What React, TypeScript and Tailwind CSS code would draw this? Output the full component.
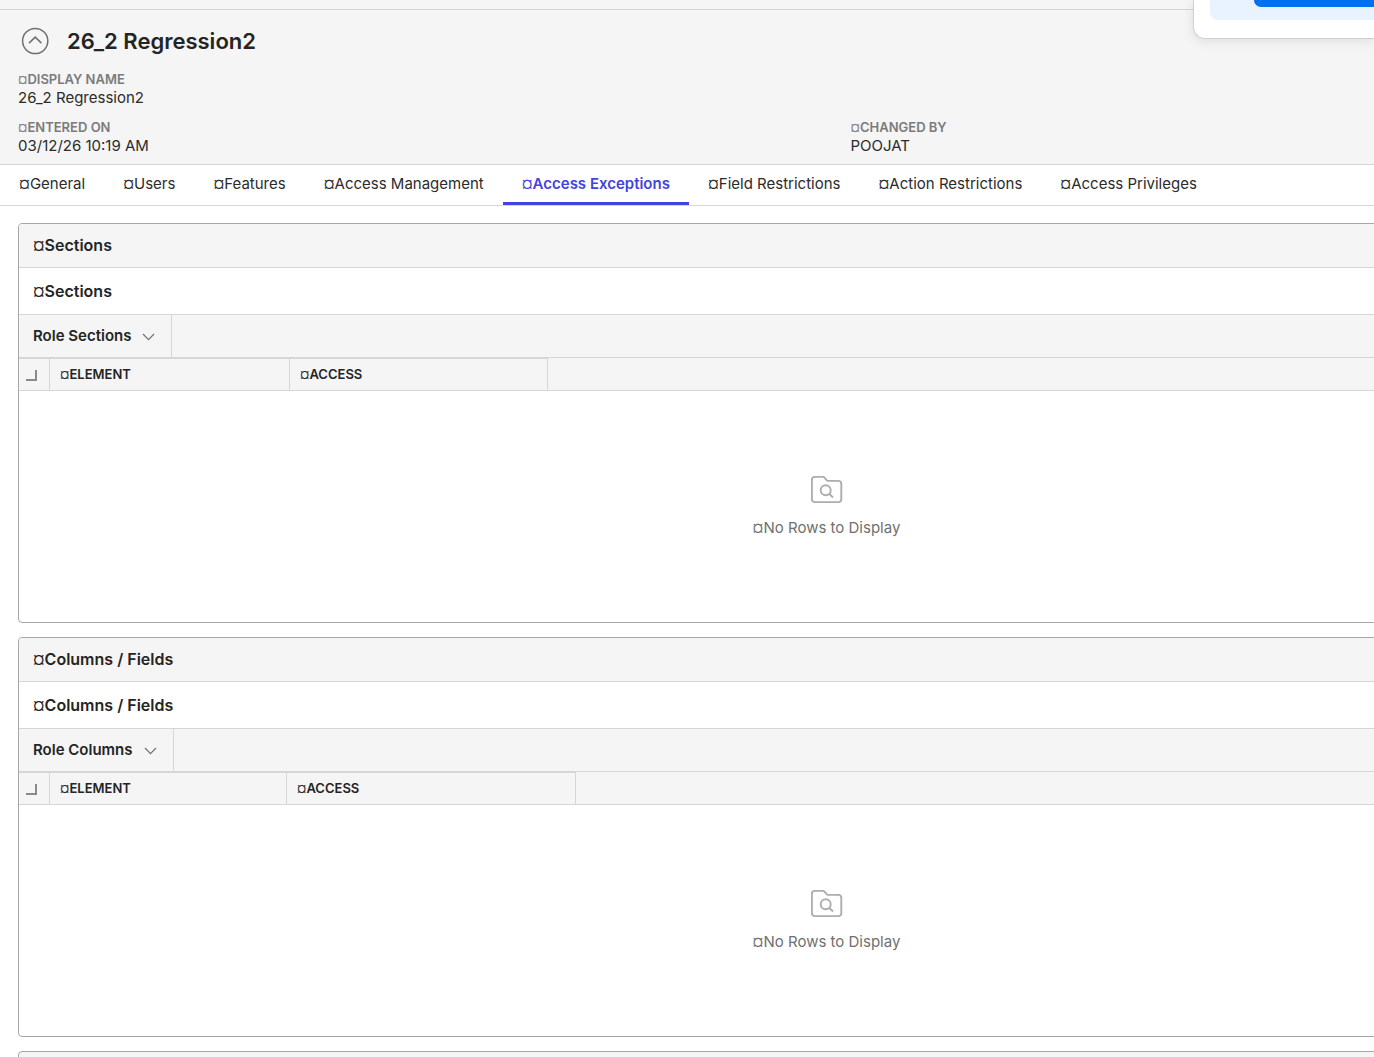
import { ReactNode } from "react";

const tabs = [
  "General",
  "Users",
  "Features",
  "Access Management",
  "Access Exceptions",
  "Field Restrictions",
  "Action Restrictions",
  "Access Privileges",
];

const activeTab = "Access Exceptions";

export default function App() {
  return (
    <div className="relative min-h-screen overflow-hidden bg-white font-['Inter','Noto_Sans',sans-serif] text-[15px] leading-5 text-[#2b2b2b]">
      <div className="w-[calc(100%+279px)]">
        <RoleHeader />
        <TabBar />
        <main className="flex flex-col gap-3.5 px-[18px] pt-[17px]">
          <ExceptionPanel title="Sections" view="Role Sections" elementCol="w-[240px]" accessCol="w-[258px]" />
          <ExceptionPanel title="Columns / Fields" view="Role Columns" elementCol="w-[237px]" accessCol="w-[289px]" />
          <section className="-mb-10 h-12 rounded-sm border border-[#a6a6a6] bg-[#f5f5f5]" />
        </main>
      </div>
      <Popup />
    </div>
  );
}

function Marked({ children }: { children: ReactNode }) {
  return (
    <>
      <span className="font-normal">¤</span>
      {children}
    </>
  );
}

function RoleHeader() {
  return (
    <header className="border-b border-[#d6d6d6] bg-[#f5f5f5]">
      <div className="h-2.5 border-b border-[#d6d6d6]" />
      <div className="px-[18px] pt-[15px] pb-2">
        <div className="flex items-center gap-[15px]">
          <button type="button" aria-label="Collapse header" className="px-[3px]">
            <svg width="28" height="28" viewBox="0 0 28 28" fill="none" stroke="#707070" strokeWidth="1.5">
              <circle cx="14.2" cy="14" r="12.6" />
              <path d="m8 16.1 6.2-6 6.2 6" />
            </svg>
          </button>
          <h1 className="text-[22px] leading-8 font-semibold text-[#242424]">26_2 Regression2</h1>
        </div>
        <dl className="mt-[13px] grid grid-cols-2 gap-x-12 gap-y-2.5">
          <Field label="DISPLAY NAME" value="26_2 Regression2" />
          <div />
          <Field label="ENTERED ON" value="03/12/26 10:19 AM" />
          <Field label="CHANGED BY" value="POOJAT" />
        </dl>
      </div>
    </header>
  );
}

function Field({ label, value }: { label: string; value: string }) {
  return (
    <div>
      <dt className="text-[13px] leading-[18px] font-semibold text-[#7b7b7b]">
        <Marked>{label}</Marked>
      </dt>
      <dd>{value}</dd>
    </div>
  );
}

function TabBar() {
  return (
    <nav className="flex h-[41px] border-b border-[#d6d6d6]">
      {tabs.map((tab) => (
        <a
          key={tab}
          href="#"
          className={
            tab === activeTab
              ? "border-b-3 border-[#4343e0] px-[19px] pt-[9px] font-semibold text-[#4343e0]"
              : "px-[19px] pt-[9px]"
          }
        >
          <Marked>{tab}</Marked>
        </a>
      ))}
    </nav>
  );
}

type PanelProps = {
  title: string;
  view: string;
  elementCol: string;
  accessCol: string;
};

function ExceptionPanel({ title, view, elementCol, accessCol }: PanelProps) {
  return (
    <section className="overflow-hidden rounded-sm border border-[#a6a6a6]">
      <h2 className="border-b border-[#d6d6d6] bg-[#f5f5f5] px-3.5 pt-[11px] pb-3 text-base leading-5 font-semibold text-[#242424]">
        <Marked>{title}</Marked>
      </h2>
      <h3 className="border-b border-[#d6d6d6] px-3.5 py-[13px] text-base leading-5 font-semibold text-[#242424]">
        <Marked>{title}</Marked>
      </h3>
      <div className="flex border-b border-[#d6d6d6] bg-[#f5f5f5]">
        <button
          type="button"
          className="flex h-[42px] items-center gap-[11px] border-r border-[#d6d6d6] pr-[15px] pl-3.5 font-semibold text-[#242424]"
        >
          {view}
          <svg width="14" height="14" viewBox="0 0 14 14" fill="none" stroke="#707070" strokeWidth="1.2">
            <path d="m1 5 5.5 5.6L12 5" />
          </svg>
        </button>
      </div>
      <div className="border-b border-[#d6d6d6] bg-[#f5f5f5]">
        <table className="table-fixed border-separate border-spacing-0 text-left text-[13px] leading-5 text-[#242424]">
          <thead>
            <tr className="h-8">
              <th aria-label="Select" className="w-[31px] border-t border-r border-[#d6d6d6] pl-1.5">
                <svg width="12" height="12" viewBox="0 0 12 12" fill="none" stroke="#8a8a8a" strokeWidth="2">
                  <path d="M1 11h10V1" />
                </svg>
              </th>
              <HeaderCell width={elementCol}>ELEMENT</HeaderCell>
              <HeaderCell width={accessCol}>ACCESS</HeaderCell>
            </tr>
          </thead>
        </table>
      </div>
      <div className="flex h-[231px] flex-col items-center pt-[84px] text-[#707070]">
        <FolderSearch />
        <p className="mt-3.5">
          <Marked>No Rows to Display</Marked>
        </p>
      </div>
    </section>
  );
}

function HeaderCell({ width, children }: { width: string; children: ReactNode }) {
  return (
    <th className={`${width} border-t border-r border-[#d6d6d6] pb-0.5 pl-2.5 font-semibold`}>
      <Marked>{children}</Marked>
    </th>
  );
}

function FolderSearch() {
  return (
    <svg width="32" height="29" viewBox="0 0 32 29" fill="none" stroke="#adadad" strokeWidth="1.9" strokeLinejoin="round">
      <path d="M3.9 1.9h7.9c.8 0 1.4.3 1.9.9l2.2 2.5c.4.4.8.6 1.4.6h10c1.7 0 3 1.2 3 2.8v15.6c0 1.7-1.3 2.8-3 2.8H3.9c-1.7 0-3-1.2-3-2.8V4.8c0-1.700 1.300-2.900 3-2.900Z" />
      <circle cx="14.700" cy="15.300" r="5" />
      <path d="m18.400 19 3.600 3.500" />
    </svg>
  );
}

function Popup() {
  return (
    <aside className="absolute top-0 right-0 w-[181px] rounded-bl-xl border-b border-l border-[#d0d0d0] bg-white pb-[18px] pl-4 shadow-[0_2px_12px_rgba(0,0,0,0.1)]">
      <div className="h-5 rounded-bl-lg bg-[#e8f3ff] pl-11">
        <button type="button" aria-label="Continue" className="block h-[7px] w-full rounded-bl-lg bg-[#0070f0]" />
      </div>
    </aside>
  );
}
